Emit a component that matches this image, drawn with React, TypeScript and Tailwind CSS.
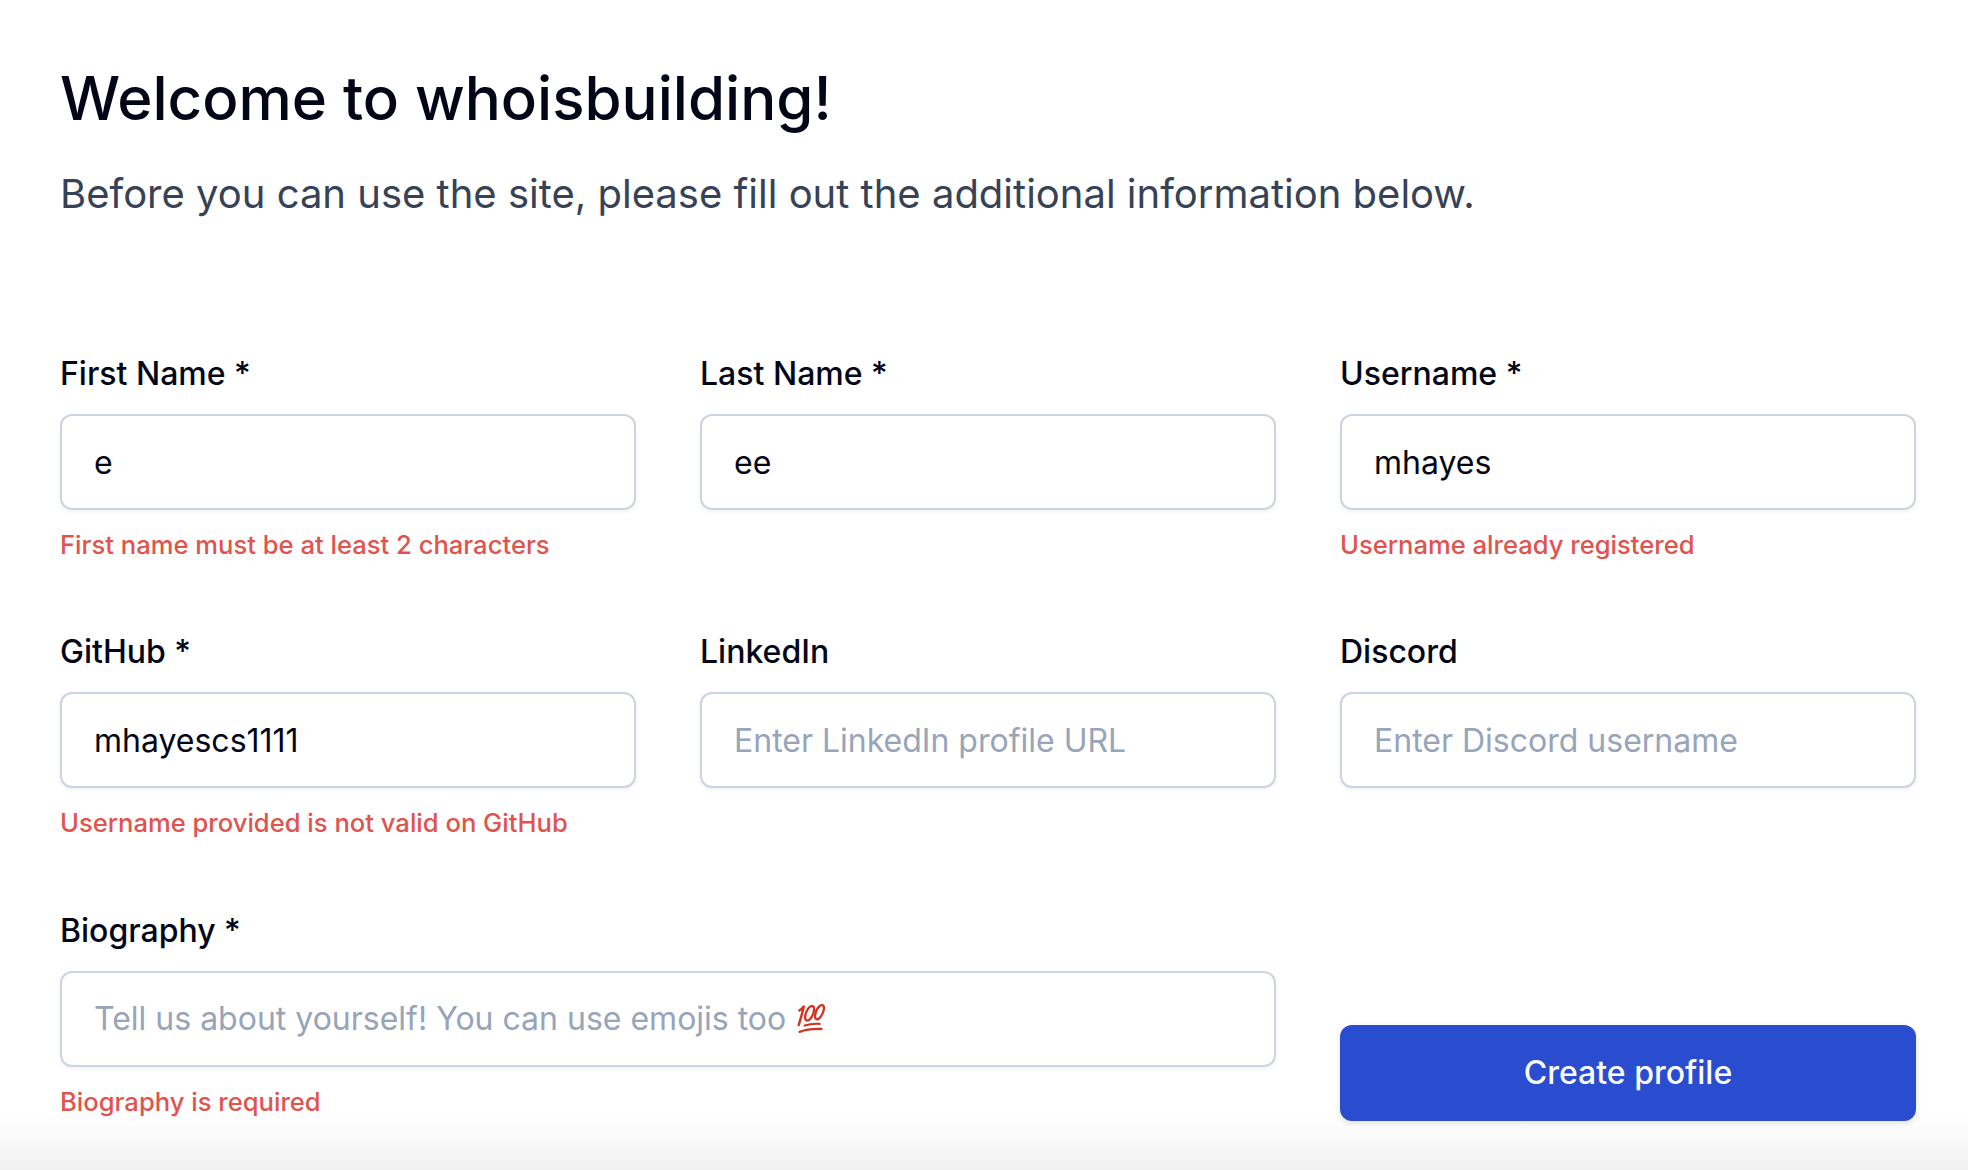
import React from "react";

type FieldProps = {
  id: string;
  label: string;
  value?: string;
  placeholder?: string;
  error?: string;
  className?: string;
  hint?: React.ReactNode;
};

function Field({ id, label, value, placeholder, error, className = "", hint }: FieldProps) {
  return (
    <div className={`flex flex-col ${className}`}>
      <label htmlFor={id} className="mb-6 h-8 text-[32px] leading-8 font-medium whitespace-nowrap">
        {label}
      </label>
      <div className="relative">
        <input
          id={id}
          defaultValue={value}
          placeholder={placeholder}
          className="block h-24 w-full rounded-xl border-2 border-[#cbd5e1] bg-white px-8 text-[32px] leading-[48px] text-[#020617] shadow-[0_2px_4px_rgba(0,0,0,0.05)] outline-none placeholder:text-[#97a4b9] placeholder:opacity-100"
        />
        {hint && (
          <div className="pointer-events-none absolute inset-0 flex items-center pl-[34px] text-[32px] whitespace-nowrap text-[#97a4b9]">
            {hint}
          </div>
        )}
      </div>
      {error && (
        <p className="mt-[21px] h-7 text-[25.6px] leading-7 font-medium whitespace-nowrap text-[#df544e]">{error}</p>
      )}
    </div>
  );
}

function HundredIcon() {
  return (
    <svg viewBox="0 0 28 30" className="mb-0.5 ml-[11px] h-[30px] w-7" fill="none" stroke="#d3301f" strokeLinecap="round" strokeLinejoin="round">
      <path d="M2.4 7.4 C4 6.6 5.6 5.2 6.8 3.4 C5.6 9 3.6 15.4 1.8 22" strokeWidth="2.4" />
      <path d="M15.6 3 C12.4 2.2 8.8 8.2 8.2 13.2 C7.8 18.4 11.2 19 14.2 14.6 C17.2 10 18.2 3.8 15.6 3 Z" strokeWidth="2.3" />
      <path d="M25.6 2.2 C22.4 1.4 18.6 7.2 18.1 12.2 C17.7 17 21 17.8 23.9 13.4 C27 8.8 28 3 25.6 2.2 Z" strokeWidth="2.3" />
      <path d="M7.6 22.6 C12 21.2 17.4 20.6 22.6 20.9" strokeWidth="2.1" />
      <path d="M2.6 28.8 C8.6 26.6 16.6 25.6 24.4 26" strokeWidth="2.3" />
    </svg>
  );
}

export default function App() {
  return (
    <main className="flex h-[1170px] w-[1968px] flex-col overflow-hidden bg-[linear-gradient(to_bottom,#ffffff_0,#ffffff_1110px,#fafafa_1140px,#f0f0f0_1170px)] pt-[68px] pr-[52px] pl-[60px] font-['Inter',sans-serif] text-[#020617]">
      <h1 className="h-[60px] text-[60px] leading-[60px] font-medium whitespace-nowrap">Welcome to whoisbuilding!</h1>
      <p className="mt-[38px] h-14 text-[40px] leading-[56px] whitespace-nowrap text-[#374256]">
        Before you can use the site, please fill out the additional information below.
      </p>
      <form className="mt-[136px] grid grid-cols-3 grid-rows-[278px_279px_182px] gap-x-16" onSubmit={(e) => e.preventDefault()}>
        <Field id="first" label="First Name *" value="e" error="First name must be at least 2 characters" />
        <Field id="last" label="Last Name *" value="ee" />
        <Field id="username" label="Username *" value="mhayes" error="Username already registered" />
        <Field id="github" label="GitHub *" value="mhayescs1111" error="Username provided is not valid on GitHub" />
        <Field id="linkedin" label="LinkedIn" placeholder="Enter LinkedIn profile URL" />
        <Field id="discord" label="Discord" placeholder="Enter Discord username" />
        <Field
          id="bio"
          label="Biography *"
          className="col-span-2"
          error="Biography is required"
          hint={
            <>
              <span>Tell us about yourself! You can use emojis too</span>
              <HundredIcon />
            </>
          }
        />
        <button className="mt-[110px] h-24 rounded-xl bg-[#2a4dd0] text-[32px] font-medium text-[#f8fafc] shadow-[0_2px_6px_rgba(0,0,0,0.12)]">
          Create profile
        </button>
      </form>
    </main>
  );
}
